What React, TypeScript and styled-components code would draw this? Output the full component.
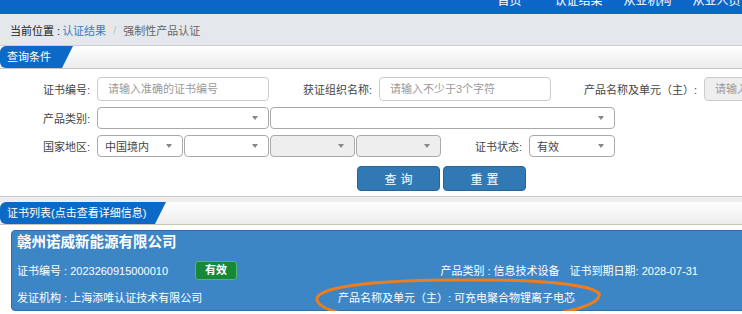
import styled, {createGlobalStyle} from "styled-components";

const GlobalStyle = createGlobalStyle`
    body {
        margin: 0;
        background: #fff;
        font-family: "Liberation Sans", "Noto Sans CJK SC", sans-serif;
        font-size: 11px;
        color: #333;
        overflow: hidden;
    }
`

const navItems = ["首页", "认证结果", "从业机构", "从业人员"];

export default function App() {
    return (
        <StyledPage>
            <GlobalStyle/>
            <StyledNav>
                <StyledNavList>
                    {navItems.map(item => <StyledNavItem key={item}>{item}</StyledNavItem>)}
                </StyledNavList>
            </StyledNav>

            <StyledCrumbs>
                <span className="here">当前位置 :</span>
                <a className="link">认证结果</a>
                <span className="sep">/</span>
                <span>强制性产品认证</span>
            </StyledCrumbs>

            <StyledPanel>
                <StyledPanelHeader>
                    <StyledTab $width={73}>查询条件</StyledTab>
                </StyledPanelHeader>
                <StyledForm>
                    <StyledRow $height={24}>
                        <StyledLabel $width={97}>证书编号:</StyledLabel>
                        <StyledInput $width={172} placeholder="请输入准确的证书编号"/>
                        <StyledLabel $width={109}>获证组织名称:</StyledLabel>
                        <StyledInput $width={172} placeholder="请输入不少于3个字符"/>
                        <StyledLabel $width={152}>产品名称及单元（主）:</StyledLabel>
                        <StyledInput $width={120} placeholder="请输入产品名称" disabled/>
                    </StyledRow>
                    <StyledRow $height={22}>
                        <StyledLabel $width={97}>产品类别:</StyledLabel>
                        <Select width={172}/>
                        <Select width={345}/>
                    </StyledRow>
                    <StyledRow $height={22}>
                        <StyledLabel $width={97}>国家地区:</StyledLabel>
                        <Select width={86} value="中国境内"/>
                        <Select width={85}/>
                        <Select width={85} disabled/>
                        <Select width={85} disabled/>
                        <StyledLabel $width={87}>证书状态:</StyledLabel>
                        <Select width={86} value="有效"/>
                    </StyledRow>
                    <StyledButtons>
                        <StyledButton>查询</StyledButton>
                        <StyledButton>重置</StyledButton>
                    </StyledButtons>
                </StyledForm>
            </StyledPanel>

            <StyledPanel>
                <StyledPanelHeader>
                    <StyledTab $width={166}>证书列表(点击查看详细信息)</StyledTab>
                </StyledPanelHeader>
                <StyledList>
                    <StyledCard>
                        <StyledCardTitle>赣州诺威新能源有限公司</StyledCardTitle>
                        <StyledCardGrid>
                            <StyledCardCell>
                                证书编号 : 2023260915000010
                                <StyledBadge>有效</StyledBadge>
                            </StyledCardCell>
                            <StyledCardCell $right>
                                <span>产品类别 : 信息技术设备</span>
                                <span>证书到期日期: 2028-07-31</span>
                            </StyledCardCell>
                            <StyledCardCell>发证机构 : 上海添唯认证技术有限公司</StyledCardCell>
                            <StyledCardCell>产品名称及单元（主）: 可充电聚合物锂离子电芯</StyledCardCell>
                        </StyledCardGrid>
                        <StyledMark viewBox="0 0 731 80" aria-hidden>
                            <path d="M447 50 C 545 49, 592 57, 588 66 C 584 80, 520 91, 445 92 C 370 93, 309 84, 306 70 C 303 58, 355 50, 447 50 Z"
                                  fill="none" stroke="#f07d1a" strokeWidth="3"/>
                        </StyledMark>
                    </StyledCard>
                </StyledList>
            </StyledPanel>
        </StyledPage>
    );
}

const Select = (props: { width: number, value?: string, disabled?: boolean }) => {
    return (
        <StyledSelect $width={props.width} $disabled={props.disabled}>
            <span>{props.value}</span>
            <StyledCaret/>
        </StyledSelect>
    );
};

const StyledPage = styled.div`
    width: 800px;
`

const StyledNav = styled.div`
    height: 14px;
    background: #0b66c7;
    overflow: hidden;
`

const StyledNavList = styled.ul`
    display: flex;
    margin: -7px 0 0;
    padding: 0 0 0 475px;
    list-style: none;
`

const StyledNavItem = styled.li`
    width: 69px;
    text-align: center;
    font-size: 12px;
    line-height: 16px;
    color: #fff;
`

const StyledCrumbs = styled.div`
    display: flex;
    align-items: center;
    height: 31px;
    padding-left: 10px;
    background: #e4e8ec;
    border-bottom: 1px solid #c9ced3;
    font-size: 11px;

    .here {
        color: #222;
        margin-right: 2px;
    }

    .link {
        color: #3a7cc0;
    }

    .sep {
        color: #c4c4c4;
        margin: 0 7px;
    }

    span:last-child {
        color: #666;
    }
`

const StyledPanel = styled.section`
    background: #fff;

    & + & {
        border-top: 5px solid #eceef0;
    }
`

const StyledPanelHeader = styled.div`
    height: 22px;
    background: linear-gradient(#fff, #ececec);
    border-bottom: 1px solid #c5c5c5;
`

const StyledTab = styled.div<{ $width: number }>`
    width: ${props => props.$width}px;
    height: 100%;
    padding-left: 7px;
    box-sizing: border-box;
    background: #0c69c6;
    color: #fff;
    font-size: 11px;
    line-height: 22px;
    border-radius: 6px 0 0 6px;
    clip-path: polygon(0 0, 100% 0, calc(100% - 11px) 100%, 0 100%);
`

const StyledForm = styled.div`
    display: flex;
    flex-direction: column;
    gap: 6px;
    padding: 8px 0 5px;
    border-bottom: 1px solid #c9c9c9;
`

const StyledRow = styled.div<{ $height: number }>`
    display: flex;
    align-items: stretch;
    gap: 1px;
    height: ${props => props.$height}px;
`

const StyledLabel = styled.label<{ $width: number }>`
    display: flex;
    align-items: center;
    justify-content: flex-end;
    width: ${props => props.$width}px;
    padding-right: 7px;
    box-sizing: border-box;
    color: #444;
    font-size: 11px;
    flex: none;
    margin-right: -1px;
`

const StyledInput = styled.input<{ $width: number }>`
    width: ${props => props.$width}px;
    box-sizing: border-box;
    padding: 0 10px;
    border: 1px solid #ccc;
    border-radius: 4px;
    font: inherit;
    font-size: 11px;
    background: #fff;
    flex: none;

    &::placeholder {
        color: #9a9a9a;
    }

    &:disabled {
        background: #eee;
    }
`

const StyledSelect = styled.div<{ $width: number, $disabled?: boolean }>`
    display: flex;
    align-items: center;
    justify-content: space-between;
    width: ${props => props.$width}px;
    box-sizing: border-box;
    padding: 0 10px 0 7px;
    border: 1px solid #aaa;
    border-radius: 4px;
    background: ${props => props.$disabled ? "#eee" : "#fff"};
    font-size: 11px;
    color: #444;
    flex: none;
`

const StyledCaret = styled.i`
    width: 0;
    height: 0;
    border-left: 3px solid transparent;
    border-right: 3px solid transparent;
    border-top: 4px solid #888;
`

const StyledButtons = styled.div`
    display: flex;
    gap: 3px;
    padding-left: 357px;
    margin-top: 3px;
`

const StyledButton = styled.button`
    width: 83px;
    height: 25px;
    border: 1px solid #2a6496;
    border-radius: 4px;
    background: #3179b5;
    color: #fff;
    font: inherit;
    font-size: 12px;
    letter-spacing: 4px;
    text-indent: 4px;
`

const StyledList = styled.div`
    padding: 5px 0 0 11px;
`

const StyledCard = styled.div`
    position: relative;
    padding: 0 5px 3px;
    border: 1px solid #2f6fa8;
    border-radius: 4px;
    background: #3d86c6;
    color: #fff;
`

const StyledCardTitle = styled.h3`
    margin: 0;
    font-size: 14.5px;
    line-height: 22px;
    font-weight: bold;
`

const StyledCardGrid = styled.div`
    display: grid;
    grid-template-columns: 321px 360px;
    row-gap: 7px;
    margin-top: 7px;
`

const StyledCardCell = styled.div<{ $right?: boolean }>`
    display: flex;
    align-items: center;
    justify-content: ${props => props.$right ? "flex-end" : "flex-start"};
    gap: 10px;
    height: 20px;
    font-size: 11px;
`

const StyledBadge = styled.span`
    margin-left: 17px;
    padding: 0 9px;
    height: 17px;
    line-height: 17px;
    border: 1px solid #4cb870;
    border-radius: 3px;
    background: #17873a;
    font-weight: bold;
    font-size: 11px;
`

const StyledMark = styled.svg`
    position: absolute;
    left: -1px;
    top: -1px;
    width: 731px;
    height: 80px;
    overflow: visible;
    pointer-events: none;
`
